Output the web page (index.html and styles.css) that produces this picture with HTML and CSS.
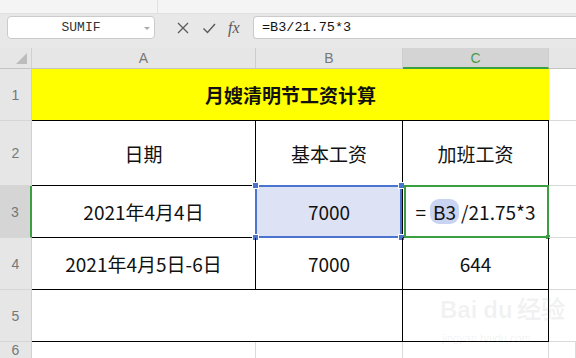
FILE: index.html
```html
<!DOCTYPE html>
<html lang="zh-CN">
<head>
    <meta charset="UTF-8">
    <title>月嫂清明节工资计算</title>
    <link rel="stylesheet" href="styles.css">
</head>
<body>
<div class="topbar">
    <div class="topbar-left"></div>
</div>

<!-- Name box + formula input -->
<div class="formula-bar">
    <div class="name-box">
        <span>SUMIF</span>
        <i class="caret"></i>
    </div>
    <div class="fx-tools">
        <svg class="tool" width="14" height="14" viewBox="0 0 14 14">
            <path d="M2 2 L12 12 M12 2 L2 12" stroke="#5a5a5a" stroke-width="1.3" fill="none"/>
        </svg>
        <svg class="tool" width="14" height="14" viewBox="0 0 14 14">
            <path d="M1.5 7.5 L5.5 11.5 L13 3" stroke="#5a5a5a" stroke-width="1.4" fill="none"/>
        </svg>
        <span class="fx">fx</span>
    </div>
    <div class="formula-input">=B3/21.75*3</div>
</div>

<div class="sheet">
    <!-- column headers -->
    <div class="corner">
        <svg width="11" height="11" viewBox="0 0 11 11"><polygon points="11,0 11,11 0,11" fill="#bcbcbc"/></svg>
    </div>
    <div class="col-head">A</div>
    <div class="col-head">B</div>
    <div class="col-head active">C</div>
    <div class="col-head last"></div>

    <!-- row 1 -->
    <div class="row-head">1</div>
    <div class="cell title">月嫂清明节工资计算</div>
    <div class="cell spare"></div>

    <!-- row 2 -->
    <div class="row-head">2</div>
    <div class="cell">日期</div>
    <div class="cell">基本工资</div>
    <div class="cell">加班工资</div>
    <div class="cell spare"></div>

    <!-- row 3 -->
    <div class="row-head active">3</div>
    <div class="cell">2021年4月4日</div>
    <div class="cell selected">
        7000
        <span class="sel-frame"></span>
        <i class="handle tl"></i><i class="handle tr"></i><i class="handle bl"></i><i class="handle br"></i>
    </div>
    <div class="cell editing">
        <span>=</span><span class="ref">B3</span><span>/21.75*3</span>
        <span class="edit-frame"></span>
        <i class="fill-dot"></i>
    </div>
    <div class="cell spare"></div>

    <!-- row 4 -->
    <div class="row-head">4</div>
    <div class="cell">2021年4月5日-6日</div>
    <div class="cell">7000</div>
    <div class="cell">644</div>
    <div class="cell spare"></div>

    <!-- row 5 -->
    <div class="row-head">5</div>
    <div class="cell merged"></div>
    <div class="cell"></div>
    <div class="cell spare"></div>

    <!-- row 6 -->
    <div class="row-head">6</div>
    <div class="cell empty"></div>
    <div class="cell empty"></div>
    <div class="cell empty"></div>
    <div class="cell empty spare"></div>
</div>

<!-- faint watermark -->
<div class="watermark">
    <div class="wm-logo">Bai<span class="wm-du">du</span>经验</div>
    <div class="wm-url">jingyan.baidu.com</div>
</div>
</body>
</html>
```

FILE: styles.css
```css
body {
    margin: 0;
    width: 576px;
    height: 358px;
    overflow: hidden;
    position: relative;
    font-family: "Noto Sans CJK SC", "Noto Sans", sans-serif;
    background-color: #e8e8e8;
}

.topbar {
    height: 13px;
    background-color: #f4f4f4;
    border-bottom: 1px solid #e0e0e0;
}

.topbar-left {
    width: 157px;
    height: 100%;
    border-right: 1px solid #e2e2e2;
}

.formula-bar {
    display: flex;
    align-items: flex-start;
    height: 34px;
    box-sizing: border-box;
    padding: 2px 0 0 7px;
}

.name-box {
    position: relative;
    width: 148px;
    height: 23px;
    box-sizing: border-box;
    border: 1px solid #cbcbcb;
    border-radius: 4px;
    background-color: #fff;
    display: flex;
    align-items: center;
    justify-content: center;
    font-family: "Liberation Mono", monospace;
    font-size: 13px;
    color: #333;
}

.caret {
    position: absolute;
    right: 4px;
    top: 10px;
    border-left: 3px solid transparent;
    border-right: 3px solid transparent;
    border-top: 3px solid #aaa;
}

.fx-tools {
    display: flex;
    align-items: center;
    gap: 12px;
    height: 23px;
    margin-left: 21px;
}

.fx {
    width: 16px;
    font-family: "Liberation Serif", serif;
    font-style: italic;
    font-size: 16px;
    color: #5a5a5a;
    line-height: 1;
}

.formula-input {
    flex: 1;
    height: 23px;
    margin-left: 9px;
    box-sizing: border-box;
    border: 1px solid #cbcbcb;
    border-right: none;
    border-radius: 4px 0 0 4px;
    background-color: #fff;
    padding-left: 8px;
    font-family: "Liberation Mono", monospace;
    font-size: 13.5px;
    line-height: 21px;
    color: #111;
}

/* spreadsheet grid */
.sheet {
    display: grid;
    grid-template-columns: 32px 224px 147px 146px 1fr;
    grid-template-rows: 21px 52px 65px 52px 52px 52px 1fr;
    height: 310px;
    background-color: #fff;
}

.corner {
    background-color: #e6e6e6;
    border-right: 1px solid #d0d0d0;
    border-bottom: 1px solid #c4c4c4;
    display: flex;
    justify-content: flex-end;
    align-items: flex-end;
    padding: 0 4px 4px 0;
}

.col-head {
    background-color: #e6e6e6;
    border-right: 1px solid #cdcdcd;
    border-bottom: 1px solid #c4c4c4;
    display: flex;
    align-items: center;
    justify-content: center;
    font-family: "Liberation Sans", sans-serif;
    font-size: 14px;
    color: #777;
}

.col-head.active {
    background-color: #d4d4d4;
    border-bottom: 2px solid #3b9f41;
    color: #4a9a4a;
}

.col-head.last {
    border-right: none;
}

.row-head {
    background-color: #e6e6e6;
    border-right: 1px solid #d0d0d0;
    border-bottom: 1px solid #d6d6d6;
    display: flex;
    align-items: center;
    justify-content: center;
    font-family: "Liberation Sans", sans-serif;
    font-size: 14px;
    color: #777;
}

.row-head.active {
    background-color: #d5d5d5;
    border-right: 2px solid #3b9f41;
}

.cell {
    position: relative;
    box-sizing: border-box;
    border-right: 1px solid #000;
    border-bottom: 1px solid #000;
    display: flex;
    align-items: center;
    justify-content: center;
    font-size: 19px;
    color: #111;
    white-space: nowrap;
}

.cell.title {
    grid-column: span 3;
    background-color: #ffff00;
    border-right: none;
    font-weight: bold;
}

.cell.merged {
    grid-column: span 2;
}

.cell.spare {
    border-right: none;
    border-bottom: 1px solid #d9d9d9;
}

.cell.empty {
    border-right: 1px solid #dadada;
    border-bottom: none;
}

/* B3 selection */
.cell.selected {
    background-color: #dde3f5;
}

.sel-frame {
    position: absolute;
    left: -1px;
    top: -1px;
    right: 0;
    bottom: -1px;
    border: 2px solid #4a74d0;
}

.handle {
    position: absolute;
    width: 5px;
    height: 5px;
    background-color: #4a74d0;
    border: 1px solid #fff;
}

.handle.tl { left: -4px; top: -4px; }
.handle.tr { right: -3px; top: -4px; }
.handle.bl { left: -4px; bottom: -4px; }
.handle.br { right: -3px; bottom: -4px; }

/* C3 being edited */
.cell.editing span {
    position: relative;
}

.ref {
    background-color: #c8d4f1;
    border-radius: 9px;
    padding: 0 3px;
    margin-left: 4px;
    margin-right: 2px;
    line-height: 25px;
}

.edit-frame {
    position: absolute !important;
    left: 1px;
    top: -1px;
    right: -1px;
    bottom: -1px;
    border: 2px solid #3b9f41;
}

.fill-dot {
    position: absolute;
    right: -2px;
    bottom: -2px;
    width: 4px;
    height: 4px;
    background-color: #3b9f41;
}

/* faint watermark */
.watermark {
    position: absolute;
    left: 440px;
    top: 296px;
    color: rgba(150, 150, 150, 0.12);
    font-family: "Liberation Sans", sans-serif;
    pointer-events: none;
}

.wm-logo {
    font-size: 24px;
    font-weight: bold;
    line-height: 28px;
}

.wm-du {
    margin-left: 6px;
    margin-right: 4px;
}

.wm-url {
    font-size: 11px;
    margin: 8px 0 0 2px;
}
```
